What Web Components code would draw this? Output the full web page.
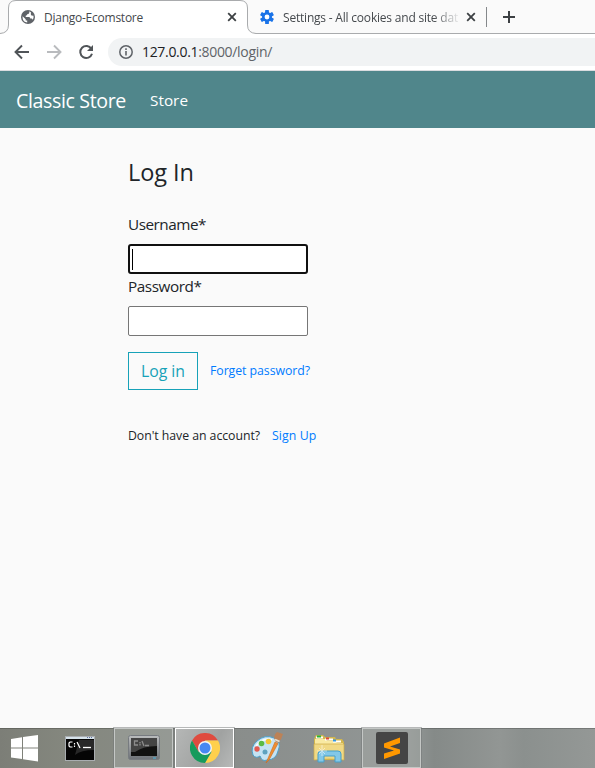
<!DOCTYPE html>
<html lang="en"><head><meta charset="utf-8"><title>Django-Ecomstore</title>
<style>html,body{margin:0;height:100%;overflow:hidden;background:#fafafa}</style></head>
<body><desktop-view></desktop-view>
<script>
const define = (name, html, init) => customElements.define(name, class extends HTMLElement {
  connectedCallback() {
    if (this.shadowRoot) return;
    this.attachShadow({mode: 'open'}).innerHTML = html;
    if (init) init.call(this, this.shadowRoot);
  }
});

// Text line whose letter spacing is adjusted to fill the width in its "w" attribute.
define('fit-text', `<style>:host{display:block;white-space:nowrap}span{display:inline-block}</style><span><slot></slot></span>`, function (r) {
  const s = r.querySelector('span'), w = +this.getAttribute('w');
  this.style.width = w + 'px';
  s.style.letterSpacing = (w - s.getBoundingClientRect().width) / this.textContent.length + 'px';
});

define('tab-close', `<style>:host{display:block;width:10px;height:10px}svg{display:block}</style>
<svg width="10" height="10"><path d="M1.2 1.2 8.8 8.8M8.8 1.2 1.2 8.8" stroke="#3c4043" stroke-width="1.8"/></svg>`);

define('tab-strip', `<style>
:host{display:flex;height:34px;box-sizing:border-box;background:linear-gradient(#a9abad,#a9abad) 0 33px/100% 1px no-repeat,#fafafa;font:12px "Open Sans","Noto Sans",sans-serif;color:#45494d;line-height:17px}
.tab{position:relative;width:256px;height:34px;flex:none;display:flex;align-items:center}
.shape{position:absolute;left:0;top:0}
.tab>:not(.shape){position:relative}
.tab svg.i{margin-left:21px;margin-right:9px}
tab-close{margin-left:84px}
.two{display:flex;align-items:center;height:34px}
.two svg{margin-left:4px;margin-right:9px}
.clip{width:175px;-webkit-mask:linear-gradient(90deg,#000 150px,transparent 178px)}
.two tab-close{margin-left:8px}
.sep{width:1px;height:20px;background:#85888b;margin-left:10px}
.two svg.plus{margin:0 0 0 16px}
</style>
<div class="tab"><svg class="shape" width="256" height="34"><path d="M0 33.5Q8.500 33 8.500 25V8Q8.500 .5 16 .5H240Q247.500 .5 247.500 8V25Q247.500 33 256 33.500V34H0Z" fill="#fff"/><path d="M0 33.500Q8.500 33 8.500 25V8Q8.500 .5 16 .5H240Q247.500 .5 247.500 8V25Q247.500 33 256 33.500" fill="none" stroke="#a9abad"/></svg>
<svg class="i" width="14" height="14" viewBox="0 0 14 14"><circle cx="7" cy="7" r="7" fill="#5f6368"/><path d="M7.900 1.600Q9 2.900 7.700 3.700L6.300 4.300Q6 5.700 4.700 5.700V6.900H8.200Q9.500 7.400 9.200 8.600H10.700Q11.600 9 11.500 10.100Q13 8.500 12.500 5.800L10.500 5.400Q9.600 4.900 9.900 3.500V2.300Q9 1.700 7.900 1.600ZM1.600 6.300 4.700 9.200V10.600H6.200V12.500Q2 12 1.600 8Z" fill="#fff"/></svg>
<fit-text w="99">Django-Ecomstore</fit-text><tab-close></tab-close></div>
<div class="two"><svg width="14" height="14" viewBox="0 0 14 14"><g fill="#1a73e8"><circle cx="7" cy="7" r="5"/><g><rect x="5.100" y="0" width="3.800" height="14" rx=".6"/><rect x="5.100" y="0" width="3.800" height="14" rx=".6" transform="rotate(60 7 7)"/><rect x="5.100" y="0" width="3.800" height="14" rx=".6" transform="rotate(120 7 7)"/></g></g><circle cx="7" cy="7" r="2.400" fill="#fff"/></svg>
<div class="clip"><fit-text w="175">Settings - All cookies and site dat</fit-text></div><tab-close></tab-close><div class="sep"></div>
<svg class="plus" width="12" height="12"><path d="M6 0V12M0 6H12" stroke="#3c4043" stroke-width="2"/></svg></div>`);

define('address-bar', `<style>
:host{display:flex;box-sizing:border-box;height:37px;background:#fff;padding-top:4px;border-bottom:1px solid #dadce0;font:14px/28px "Open Sans","Noto Sans",sans-serif;color:#5f6368}
svg{display:block;flex:none}.nav{margin-top:6px;margin-left:14px}.nav+.nav{margin-left:16px}
.pill{margin-left:14px;flex:1;height:28px;background:#f1f3f4;border-radius:14px 0 0 14px;display:flex;align-items:center;padding-left:11px}
.pill svg{margin-right:9px}b{font-weight:400;color:#202124}</style>
<svg class="nav" width="16" height="16"><path d="M15 8H2M8 1.500 1.500 8 8 14.500" fill="none" stroke="#505458" stroke-width="1.900"/></svg>
<svg class="nav" width="16" height="16"><path d="M1 8H14M8 1.500 14.500 8 8 14.500" fill="none" stroke="#b9bbbe" stroke-width="1.900"/></svg>
<svg class="nav" width="16" height="16"><path d="M13.400 4.900A6 6 0 1 0 14 9.800" fill="none" stroke="#505458" stroke-width="2"/><path d="M15 1V7H9Z" fill="#505458"/></svg>
<div class="pill"><svg width="14" height="14"><circle cx="7" cy="7" r="6.200" fill="none" stroke="#5f6368" stroke-width="1.500"/><path d="M7 6V10.500M7 3.300V4.900" stroke="#5f6368" stroke-width="1.600"/></svg>
<fit-text w="130"><b>127.0.0.1</b>:8000/login/</fit-text></div>`);

define('site-nav', `<style>:host{display:flex;align-items:center;height:57px;background:#50868b;padding-left:16px;gap:24px;color:#fff;font-family:"Open Sans","Noto Sans",sans-serif}
.a{font-size:19.600px;line-height:30px;margin-top:2px}.b{font-size:15.300px;line-height:24px;margin-top:1px}</style>
<fit-text class="a" w="110">Classic Store</fit-text><fit-text class="b" w="38">Store</fit-text>`);

define('text-field', `<style>:host{display:block}fit-text{font-size:15.300px;line-height:24px}
.box{box-sizing:border-box;width:180px;height:30px;margin-top:8px;background:#fff;border:1px solid #767676;border-radius:2px}
:host([focused]) .box{border:2px solid #101010;border-radius:3px;padding:3px 0 0 2px}
:host([focused]) .box::before{content:"";display:block;width:1px;height:21px;background:#000}</style>
<fit-text></fit-text><div class="box"></div>`, function (r) {
  const t = document.createElement('fit-text');
  t.setAttribute('w', this.getAttribute('label-width'));
  t.textContent = this.getAttribute('label');
  r.querySelector('fit-text').replaceWith(t);
});

define('login-form', `<style>:host{display:block;padding:28px 0 0 128px;color:#212529;font-family:"Open Sans","Noto Sans",sans-serif}
h4{margin:0;font-size:23.500px;font-weight:400;line-height:32px}
.u{margin-top:24px}.row{display:flex;align-items:center;gap:12px;font-size:12.300px;line-height:18px}
.act{margin-top:16px;height:38px}.act>fit-text{margin-top:-1px}
.btn{box-sizing:border-box;width:70px;height:38px;border:1px solid #17a2b8;padding:6px 12px;color:#17a2b8;font-size:15.800px;line-height:25px}
.link{color:#007bff}.join{margin-top:37px}</style>
<h4><fit-text w="66">Log In</fit-text></h4>
<text-field class="u" label="Username*" label-width="78" focused></text-field>
<text-field label="Password*" label-width="73.5"></text-field>
<div class="row act"><div class="btn"><fit-text w="44">Log in</fit-text></div><fit-text class="link" w="100">Forget password?</fit-text></div>
<div class="row join"><fit-text w="132">Don't have an account?</fit-text><fit-text class="link" w="44.5">Sign Up</fit-text></div>`);

define('task-button', `<style>:host{display:grid;place-items:center;box-sizing:border-box;width:59px;height:40px;flex:none}
:host([open]){border:1px solid #c4c7c5;outline:1px solid #72767580;outline-offset:0;background:#a7aaa770}
:host([active]){border:1px solid #fff;background:linear-gradient(120deg,#b5b7b6,#a0a2a1 60%,#b7b9b8)}</style><slot></slot>`);

define('task-bar', `<style>
:host{display:flex;height:40px;box-sizing:border-box;padding-left:0;background:linear-gradient(#0003 0 1px,transparent 1px),linear-gradient(90deg,#7c7e77 0,#85887f 12%,#8a8e8c 42%,#929796 69%,#858a88 73%,#929694 84%,#8b908e 88%,#949896 100%)}
svg{display:block}.s{width:50px}.c{width:60px}.t{margin-left:4px}.ch{margin-left:2px;width:59px}.p{margin-left:3px;width:60px}.f{width:64px}.su{margin-left:1px}
</style>
<task-button class="s"><svg width="28" height="27"><path d="M0 4 11 2.300V12.500H0ZM12 2.100 27 0V12.500H12ZM0 13.500H11V24L0 22.500ZM12 13.500H27V26.500L12 24.300Z" fill="#fff"/></svg></task-button>
<task-button class="c"><svg width="30" height="25"><rect x=".5" y=".5" width="29" height="24" fill="#050505" stroke="#a9adb0"/><rect x="1" y="1" width="28" height="2" fill="#d5e2ea"/><path d="M22 1.500h1m1 0h1m1 0h1" stroke="#6072a5"/><path d="M14 4H29V14Q16 14 10 19Z" fill="#282828"/><path d="M7.500 6H5L4 7V10L5 11H7.500M9.500 7V8.500M9.500 9.500V11M12 6 15 12" fill="none" stroke="#fff" stroke-width="1.200"/><path d="M18 11.500H26" stroke="#fff" stroke-width="1.300"/></svg></task-button>
<task-button class="t" open><svg width="32" height="26"><defs><linearGradient id="m" x2="0" y2="1"><stop stop-color="#bbbdbe"/><stop offset="1" stop-color="#6d7177"/></linearGradient></defs><rect x=".5" y=".5" width="31" height="24" rx="2" fill="url(#m)" stroke="#777b80"/><rect x="3" y="3" width="26" height="18" fill="#111"/><path d="M3 3H29V11Q15 11 7 17H3Z" fill="#444"/><path d="M10 6H6.500V10H10M12 7V8.500M12 9V10.500M14 6 16 11M17 10.500H21" fill="none" stroke="#8c8c8c" stroke-width="1.300"/><path d="M25 23H28" stroke="#45b5df"/></svg></task-button>
<task-button class="ch" open active><svg width="30" height="30" viewBox="-15 -15 30 30"><path d="M-13-7.500A15 15 0 0 1 13-7.500H0L-6.500 3.750Z" fill="#df4b3f"/><path d="M13-7.500A15 15 0 0 1 0 15L6.500 3.750 0-7.500Z" fill="#ffd04c"/><path d="M0 15A15 15 0 0 1-13-7.500L-6.500 3.750H6.500Z" fill="#169b5c"/><circle r="7" fill="#f2f4f4"/><circle r="5.500" fill="#4688f1"/></svg></task-button>
<task-button class="p"><svg width="33" height="32"><path d="M2 23Q-1 15 6 9Q14 2 23 6Q31 10 27 19Q25 28 16 28Q11 30 9 24Q5 27 2 23Z" fill="#c5e3f3" stroke="#4c9fc9"/><path d="M5 14Q12 5 21 8" fill="none" stroke="#f4fcff" stroke-width="2"/><circle cx="14" cy="20" r="2.500" fill="#5fa2bf"/><circle cx="6" cy="17" r="2.700" fill="#e35a50"/><circle cx="10.500" cy="11.500" r="2.800" fill="#5bbb45"/><circle cx="17.500" cy="9.500" r="2.800" fill="#f3c637"/><path d="M15 31 24 10 27 11.500 18 28Z" fill="#ef8e31" stroke="#c66c24" stroke-width=".6"/><path d="M24 9Q22 3 26 0L32 2Q31 7 27 11Z" fill="#bc8257"/><path d="M24 7.500 28.500 9.500" stroke="#e4e0d3" stroke-width="1.700"/></svg></task-button>
<task-button class="f"><svg width="32" height="29"><path d="M1 5 3 1H10L12 3H22L23 5H29L31 8V26H1Z" fill="#d2b64e"/><path d="M2 5H13L14 7H22L24 9H30V25H2Z" fill="#f9eaa3"/><path d="M1 10H31V26Q16 24 1 26Z" fill="#f0d985" stroke="#cfad49" stroke-width=".7"/><path d="M3 3.500H10M12 5.500H20M20 7.500H28" stroke="#fff" stroke-width="2"/><path d="M4 2.500H8" stroke="#27b338" stroke-width="2"/><path d="M13 4.500H16" stroke="#db473b" stroke-width="2"/><path d="M20 6.500H23" stroke="#3397df" stroke-width="2"/><path d="M5 28V20Q5 17 8 17H25Q28 17 28 20V28H22V22H11V28Z" fill="#83c8e8" stroke="#469fc9"/><path d="M9 11V22M4 17H14M6 14 12 20M12 14 6 20" stroke="#fff" stroke-width=".8" opacity=".65"/></svg></task-button>
<task-button class="su" open><svg width="32" height="32"><rect width="32" height="32" rx="2" fill="#454545"/><path d="M8 11.500 24 5.500V11L14 14.500 24 17.500V21.500L8 27V21.500L18 18.500 8 15.500Z" fill="#ff9800"/></svg></task-button>`);

define('desktop-view', `<style>:host{display:flex;flex-direction:column;width:595px;height:768px;background:#fafafa}login-form{flex:1}</style>
<tab-strip></tab-strip><address-bar></address-bar><site-nav></site-nav><login-form></login-form><task-bar></task-bar>`);
</script></body></html>
